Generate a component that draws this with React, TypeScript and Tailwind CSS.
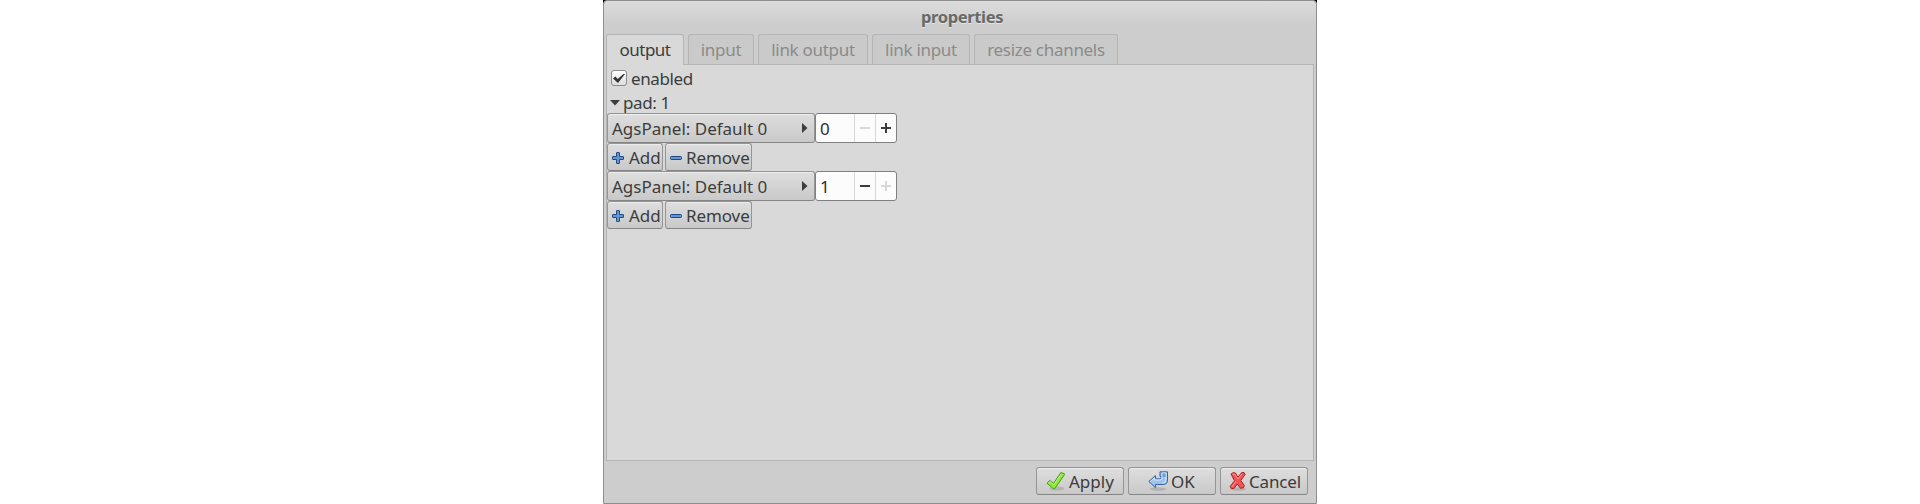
import React from "react";

function AddIcon() {
  return (
    <svg className="mt-[2px] shrink-0" width="12" height="12" viewBox="0 0 12 12">
      <path d="M4.500 1q0-.5.5-.5h2q.5 0 .5.5v3.500H11q.5 0 .5.5v2q0 .5-.5.5H7.500V11q0 .5-.5.5H5q-.5 0-.5-.5V7.500H1q-.5 0-.5-.5V5q0-.5.5-.5h3.500z" fill="#6496d0" stroke="#204a87" />
    </svg>
  );
}

function RemoveIcon() {
  return (
    <svg className="mt-[2px] shrink-0" width="12" height="12" viewBox="0 0 12 12">
      <rect x=".5" y="4.500" width="11" height="3" rx=".8" fill="#6496d0" stroke="#204a87" />
    </svg>
  );
}

function ApplyIcon() {
  return (
    <svg className="shrink-0" width="20" height="20" viewBox="0 0 20 20">
      <ellipse cx="11" cy="17.500" rx="7.500" ry="2" fill="#000" opacity=".12" />
      <path d="M1 12.200 3.600 9.400 7.600 12.300 14.800 1.600 18.300 2.700 18.500 3.600 8.800 17.600 7.300 17.600z" fill="#8ee83e" stroke="#4a9a12" strokeLinejoin="round" />
      <path d="m2.600 12 1.300-1.300 3.900 3L15.300 3" fill="none" stroke="#bdf588" strokeWidth=".9" />
    </svg>
  );
}

function OkIcon() {
  return (
    <svg className="shrink-0" width="20" height="20" viewBox="0 0 20 20">
      <ellipse cx="10" cy="18" rx="8" ry="1.800" fill="#000" opacity=".13" />
      <path d="M.8 10.500 7.500 4.500v3.300h4.200q1.300 0 1.300-1.300V5.500h-1V.8h7.500V9q0 4.500-4.500 4.500H7.500v3.200z" fill="#9fc2ea" stroke="#3465a4" strokeLinejoin="round" />
      <path d="m2.600 10.500 4-3.500v2h5.500q2 0 2-2V2H18v6q0 4-3.500 4" fill="none" stroke="#dce9f8" strokeWidth=".9" />
      <path d="M14.500 2.500h3V6h-3z" fill="#6b9bd2" />
    </svg>
  );
}

function CancelIcon() {
  return (
    <svg className="shrink-0" width="20" height="20" viewBox="0 0 20 20">
      <ellipse cx="10" cy="18" rx="8" ry="1.800" fill="#000" opacity=".13" />
      <path d="M3 3 5 1.700 7.500 2 10 6.300 13.500 1.700 16 1.500 17.200 3.300 12.800 9.500 16.300 14.500 15.500 16.700 12.500 17.300 9.300 13 6 17.500 3.300 17.500 2.200 15.500 6.500 9.700z" fill="#f05555" stroke="#b81c1c" strokeLinejoin="round" />
      <path d="M4.300 3.400 6.700 3 10 8l4-5.200M4 15.800l4-5.600" fill="none" stroke="#ff9c9c" strokeWidth=".9" />
    </svg>
  );
}

const raised =
  "flex items-center rounded-[3px] border border-[#959595] border-b-[#858585] bg-linear-to-b from-[#dedede] to-[#c9c9c9] shadow-[inset_0_1px_0_#ececec]";

function Spin({ value, down, up }: { value: number; down: boolean; up: boolean }) {
  return (
    <div className="flex h-[30px] w-[82px] rounded-[3px] border border-[#808080] bg-[#fcfcfc]">
      <span className="w-[38px] pl-1 leading-[30px] text-[#2d2d2d]">{value}</span>
      <span className="flex w-[21px] items-center justify-center border-l border-[#d8d8d8]">
        <svg width="10" height="10" viewBox="0 0 10 10" fill={down ? "#3c3c3c" : "#d8d8d8"}>
          <path d="M0 4h10v2H0z" />
        </svg>
      </span>
      <span className="flex w-[21px] items-center justify-center border-l border-[#d8d8d8]">
        <svg width="10" height="10" viewBox="0 0 10 10" fill={up ? "#3c3c3c" : "#d8d8d8"}>
          <path d="M0 4h4V0h2v4h4v2H6v4H4V6H0z" />
        </svg>
      </span>
    </div>
  );
}

function Line({ value }: { value: number }) {
  return (
    <div>
      <div className="flex">
        <div className={`${raised} h-[30px] w-[208px] justify-between pr-[6px] pl-1`}>
          <span className="pt-[2px]">AgsPanel: Default 0</span>
          <svg width="6" height="10" viewBox="0 0 6 10">
            <path d="M0 0 5.500 5 0 10z" fill="#3c3c3c" />
          </svg>
        </div>
        <Spin value={value} down={value > 0} up={value < 1} />
      </div>
      <div className="flex h-[28px] gap-[2px]">
        <div className={`${raised} w-[56px] gap-[5px] pl-1`}>
          <AddIcon />
          <span className="pt-[2px]">Add</span>
        </div>
        <div className={`${raised} w-[87px] gap-1 pl-1`}>
          <RemoveIcon />
          <span className="pt-[2px] tracking-[-0.1px]">Remove</span>
        </div>
      </div>
    </div>
  );
}

const tabs = [
  { label: "input", width: "w-[66px]" },
  { label: "link output", width: "w-[110px]" },
  { label: "link input", width: "w-[98px]" },
  { label: "resize channels", width: "w-[144px]" },
];

export default function App() {
  return (
    <div className="flex h-[504px] w-full justify-center bg-white font-['Noto_Sans',sans-serif] text-[17px] leading-[24px] whitespace-nowrap text-[#3c3c3c]">
      <div className="h-[504px] w-[714px] bg-linear-to-b from-black from-[5px] to-transparent to-[5px]">
        <div className="flex h-full flex-col rounded-t-[4px] border border-[#8e8e8e] bg-[#cdcdcd] bg-linear-to-b from-[#dcdcdc] to-[#cdcdcd] to-[24px] px-[2px]">
          <h1 className="h-[33px] pt-[4px] pl-[4px] text-center text-[16.500px] font-bold tracking-[-0.35px] text-[#696969] [text-shadow:0_1px_0_#e4e4e4]">properties</h1>
          <div className="flex h-[30px] gap-1 tracking-[-0.3px]">
            <div className="z-10 h-[31px] w-[78px] rounded-t-[3px] border border-b-0 border-[#b5b5b5] bg-[#d9d9d9] pt-[3px] text-center tracking-[-0.5px]">output</div>
            {tabs.map((t) => (
              <div key={t.label} className={`${t.width} h-[30px] rounded-t-[3px] border border-b-0 border-[#b5b5b5] bg-[#cacaca] pt-[3px] text-center text-[#8b8b8b]`}>
                {t.label}
              </div>
            ))}
          </div>
          <div className="h-[397px] border border-[#b5b5b5] bg-[#d9d9d9]">
            <label className="flex h-[26px] items-center gap-1 pl-1">
              <span className="flex size-[16px] items-center justify-center rounded-[3px] border border-[#8c8c8c] bg-linear-to-b from-white to-[#dddddd]">
                <svg className="shrink-0" width="12" height="11" viewBox="0 0 12 11">
                  <path d="M0 5.500 2.300 3.500 4.700 6 10.500 1 12 1 5 10z" fill="#333" />
                </svg>
              </span>
              <span className="pt-[1px] tracking-[-0.4px]">enabled</span>
            </label>
            <div className="flex h-[22px] items-center gap-[3px] pl-[3px]">
              <svg className="mt-[2px]" width="10" height="6" viewBox="0 0 10 6">
                <path d="M0 0h10L5 5.500z" fill="#3c3c3c" />
              </svg>
              <span className="pt-[2px] tracking-[-0.4px]">pad: 1</span>
            </div>
            <Line value={0} />
            <Line value={1} />
          </div>
          <div className="mt-[6px] flex h-[28px] justify-end gap-1 pr-[6px]">
            <div className={`${raised} w-[88px] gap-[3px] pl-[9px]`}>
              <ApplyIcon />
              <span className="pt-[2px]">Apply</span>
            </div>
            <div className={`${raised} w-[88px] gap-[3px] pl-[19px]`}>
              <OkIcon />
              <span className="pt-[2px]">OK</span>
            </div>
            <div className={`${raised} w-[88px] gap-[1px] pl-[7px]`}>
              <CancelIcon />
              <span className="pt-[2px] tracking-[-0.15px]">Cancel</span>
            </div>
          </div>
        </div>
      </div>
    </div>
  );
}
